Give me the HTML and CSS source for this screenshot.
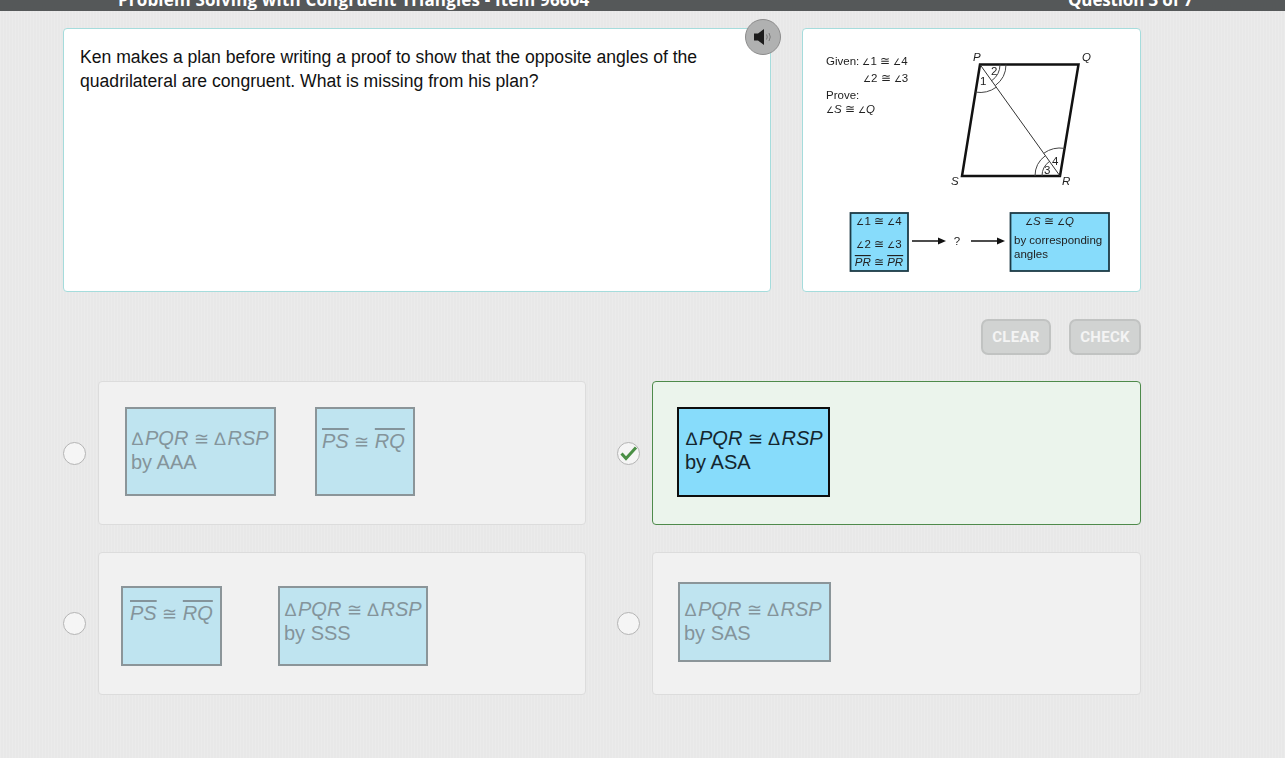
FILE: index.html
```html
<!DOCTYPE html>
<html lang="en">
<head>
    <meta charset="UTF-8">
    <meta name="viewport" content="width=device-width, initial-scale=1.0">
    <title>Problem Solving with Congruent Triangles</title>
    <link rel="stylesheet" href="styles.css">
</head>
<body>
    <header class="top-bar">
        <span class="lesson-title">Problem Solving with Congruent Triangles - Item 96604</span>
        <span class="question-count">Question 3 of 7</span>
    </header>
    <main class="container">
        <section class="question-row">
            <div class="panel prompt">
                <p>Ken makes a plan before writing a proof to show that the opposite angles of the quadrilateral are congruent. What is missing from his plan?</p>
            </div>
            <button class="speaker" type="button" aria-label="Read aloud">
                <svg width="22" height="20" viewBox="0 0 22 20">
                    <path d="M2 6.500h4l6-4.500v16l-6-4.500H2z" fill="#1c1c1c"/>
                    <path d="M14.500 7.500q1.500 2.500 0 5M17 6q2.500 4 0 8" fill="none" stroke="#777" stroke-width="1"/>
                </svg>
            </button>
            <div class="panel figure">
                <svg class="figure-art" width="337" height="262" viewBox="0 0 337 262">
                    <g class="fig-text">
                        <text x="23" y="36">Given: <tspan class="ang">∠</tspan>1 ≅ <tspan class="ang">∠</tspan>4</text>
                        <text x="60" y="53"><tspan class="ang">∠</tspan>2 ≅ <tspan class="ang">∠</tspan>3</text>
                        <text x="23" y="70">Prove:</text>
                        <text x="23" y="84"><tspan class="ang">∠</tspan><tspan font-style="italic">S</tspan> ≅ <tspan class="ang">∠</tspan><tspan font-style="italic">Q</tspan></text>
                        <g font-style="italic">
                            <text x="170" y="32">P</text>
                            <text x="279" y="32">Q</text>
                            <text x="148" y="156">S</text>
                            <text x="259" y="156">R</text>
                        </g>
                        <text x="177" y="56">1</text>
                        <text x="188" y="46">2</text>
                        <text x="241" y="145">3</text>
                        <text x="249" y="136">4</text>
                    </g>
                    <path d="M177 35.500H275.500L257 147H159z" fill="none" stroke="#111" stroke-width="2.500"/>
                    <path d="M177 35.500L257 147" stroke="#333" stroke-width="1"/>
                    <g fill="none" stroke="#444" stroke-width="1">
                        <path d="M172.500 63.100A28 28 0 0 0 193.300 58.200"/>
                        <path d="M192.200 56.600A26 26 0 0 0 203 35.500"/>
                        <path d="M188.700 51.700A20 20 0 0 0 197 35.500"/>
                        <path d="M239 147A18 18 0 0 1 246.500 132.400"/>
                        <path d="M232 147A25 25 0 0 1 242.400 126.700"/>
                        <path d="M240.700 124.300A28 28 0 0 1 261.600 119.400"/>
                    </g>

                    <rect x="47.500" y="184" width="57.500" height="58" fill="#87dcfb" stroke="#1c3a45" stroke-width="1.800"/>
                    <g class="fig-text" text-anchor="middle">
                        <text x="76" y="196"><tspan class="ang">∠</tspan>1 ≅ <tspan class="ang">∠</tspan>4</text>
                        <text x="76" y="219"><tspan class="ang">∠</tspan>2 ≅ <tspan class="ang">∠</tspan>3</text>
                        <text x="76" y="237"><tspan font-style="italic" text-decoration="overline">PR</tspan> ≅ <tspan font-style="italic" text-decoration="overline">PR</tspan></text>
                        <text x="154" y="216">?</text>
                    </g>
                    <path d="M109 212h27" stroke="#111" stroke-width="1.500"/>
                    <path d="M143 212l-8-3.500v7z" fill="#111"/>
                    <path d="M168 212h27" stroke="#111" stroke-width="1.500"/>
                    <path d="M202 212l-8-3.500v7z" fill="#111"/>

                    <rect x="207.500" y="184" width="98.500" height="58" fill="#87dcfb" stroke="#1c3a45" stroke-width="1.800"/>
                    <g class="fig-text">
                        <text x="222" y="196"><tspan class="ang">∠</tspan><tspan font-style="italic">S</tspan> ≅ <tspan class="ang">∠</tspan><tspan font-style="italic">Q</tspan></text>
                        <text x="211" y="215">by corresponding</text>
                        <text x="211" y="229">angles</text>
                    </g>
                </svg>
            </div>
        </section>

        <div class="actions">
            <button class="action-btn clear-btn" type="button">CLEAR</button>
            <button class="action-btn" type="button">CHECK</button>
        </div>

        <section class="answers">
            <div class="answer">
                <span class="radio"></span>
                <div class="card card-tall">
                    <div class="tile tile-wide">
                        <div class="math"><span class="tri">∆</span><i>PQR</i> <span class="cong">≅</span> <span class="tri">∆</span><i>RSP</i></div>
                        <div>by AAA</div>
                    </div>
                    <div class="tile tile-short">
                        <div class="math"><i class="bar">PS</i> <span class="cong">≅</span> <i class="bar">RQ</i></div>
                    </div>
                </div>
            </div>
            <div class="answer">
                <span class="radio">
                    <svg width="19" height="16" viewBox="0 0 19 16">
                        <path d="M2.500 8.500l4.500 5L17 2.500" fill="none" stroke="#4a8f45" stroke-width="3"/>
                    </svg>
                </span>
                <div class="card card-tall card-selected">
                    <div class="tile tile-chosen">
                        <div class="math"><span class="tri">∆</span><i>PQR</i> <span class="cong">≅</span> <span class="tri">∆</span><i>RSP</i></div>
                        <div>by ASA</div>
                    </div>
                </div>
            </div>
            <div class="answer">
                <span class="radio"></span>
                <div class="card card-low">
                    <div class="tile tile-short tile-top">
                        <div class="math"><i class="bar">PS</i> <span class="cong">≅</span> <i class="bar">RQ</i></div>
                    </div>
                    <div class="tile tile-wide tile-sss">
                        <div class="math"><span class="tri">∆</span><i>PQR</i> <span class="cong">≅</span> <span class="tri">∆</span><i>RSP</i></div>
                        <div>by SSS</div>
                    </div>
                </div>
            </div>
            <div class="answer">
                <span class="radio"></span>
                <div class="card card-low">
                    <div class="tile tile-sas">
                        <div class="math"><span class="tri">∆</span><i>PQR</i> <span class="cong">≅</span> <span class="tri">∆</span><i>RSP</i></div>
                        <div>by SAS</div>
                    </div>
                </div>
            </div>
        </section>
    </main>
</body>
</html>
```

FILE: styles.css
```css
body {
    margin: 0;
    height: 758px;
    overflow: hidden;
    font-family: "Liberation Sans", Arial, sans-serif;
    color: #111;
    background-color: #e8e8e8;
    background-image:
        repeating-linear-gradient(90deg, rgba(255,255,255,0.14) 0 1px, transparent 1px 3px);
}
.top-bar {
    height: 11px;
    background-color: #555859;
    overflow: hidden;
    display: flex;
    align-items: flex-end;
    justify-content: space-between;
    padding: 0 92px 0 118px;
    font-family: "Open Sans", sans-serif;
    font-weight: 700;
    font-size: 17px;
    line-height: 22px;
    color: #fff;
    white-space: nowrap;
}
.lesson-title, .question-count {
    flex: none;
}
.lesson-title {
    letter-spacing: 0.17px;
}
.question-count {
    letter-spacing: -0.15px;
}
.container {
    width: 1078px;
    margin-left: 63px;
    padding-top: 17px;
}
.question-row {
    position: relative;
    display: flex;
    gap: 31px;
}
.panel {
    box-sizing: border-box;
    height: 264px;
    background-color: #fff;
    border: 1px solid #a5dcdc;
    border-radius: 4px;
}
.prompt {
    width: 708px;
    padding: 16px;
    font-size: 17.600px;
    line-height: 24px;
}
.prompt p {
    margin: 0;
}
.figure {
    width: 339px;
}
.figure-art {
    display: block;
    filter: blur(0.25px);
}
.fig-text {
    font-family: "Liberation Sans", sans-serif;
    font-size: 11.500px;
    fill: #222;
}
.ang {
    font-size: 9px;
}
.speaker {
    position: absolute;
    left: 682px;
    top: -9px;
    width: 36px;
    height: 36px;
    padding: 0;
    border: 1px solid #8c8c8c;
    border-radius: 50%;
    background-color: #b0b1b1;
    display: flex;
    align-items: center;
    justify-content: center;
}
.actions {
    display: flex;
    justify-content: flex-end;
    gap: 18px;
    margin-top: 27px;
}
.action-btn {
    box-sizing: border-box;
    width: 72px;
    height: 36px;
    padding: 0;
    border: 2px solid #c1c3c2;
    border-radius: 7px;
    background-color: #d1d3d2;
    color: #f4f4f4;
    font-family: Roboto, sans-serif;
    font-weight: 700;
    font-size: 15px;
    letter-spacing: 0.3px;
}
.clear-btn {
    width: 70px;
}
.answers {
    display: grid;
    grid-template-columns: 523px 524px;
    column-gap: 31px;
    row-gap: 27px;
    margin-top: 26px;
}
.answer {
    display: flex;
    align-items: center;
    gap: 12px;
}
.radio {
    box-sizing: border-box;
    flex: none;
    width: 23px;
    height: 23px;
    border: 1px solid #b4b4b4;
    border-radius: 50%;
    background-color: #f5f5f5;
    display: flex;
    align-items: center;
    justify-content: center;
}
.card {
    box-sizing: border-box;
    flex: 1;
    display: flex;
    background-color: #f1f1f1;
    border: 1px solid #dcdcdc;
    border-radius: 4px;
}
.card-tall {
    height: 144px;
    padding: 25px 26px;
    gap: 39px;
}
.card-low {
    height: 143px;
    padding: 33px 22px;
    gap: 56px;
}
.card-selected {
    background-color: #ebf4ec;
    border-color: #4e8a4b;
    padding-left: 24px;
}
.tile {
    box-sizing: border-box;
    height: 89px;
    padding: 17px 2px 0 4px;
    border: 2px solid #8b9599;
    background-color: #bfe4f0;
    color: #84949b;
    font-size: 20px;
    line-height: 24px;
    white-space: nowrap;
}
.math {
    height: 24px;
    padding-left: 1px;
}
.tri {
    font-size: 18px;
    line-height: 0;
    margin-right: 2px;
}
.cong {
    font-size: 18px;
    line-height: 0;
}
.bar {
    text-decoration: overline;
}
.tile-wide {
    width: 151px;
}
.tile-short {
    width: 100px;
    padding-top: 20px;
}
.tile-top {
    width: 101px;
    height: 80px;
    padding-top: 13px;
    padding-left: 6px;
}
.tile-sss {
    width: 150px;
    height: 80px;
    padding-top: 9px;
}
.tile-sas {
    width: 153px;
    height: 80px;
    margin-top: -4px;
    margin-left: 3px;
    padding-top: 13px;
}
.tile-chosen {
    width: 153px;
    height: 90px;
    padding-left: 6px;
    border-color: #0d0d0d;
    background-color: #87dcfb;
    color: #14262e;
}
```
